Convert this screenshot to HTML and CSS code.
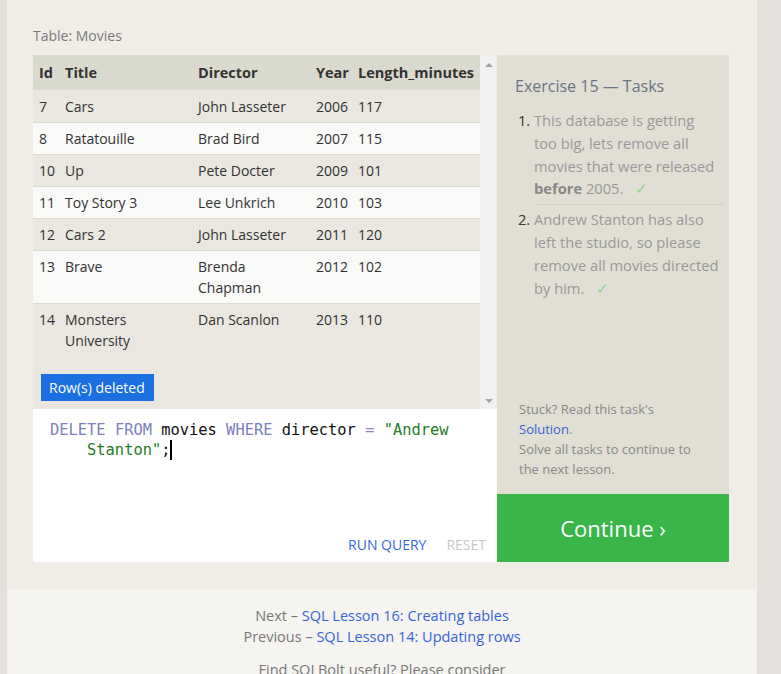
FILE: index.html
```html
<!DOCTYPE html>
<html>
<head>
<meta charset="utf-8">
<link rel="stylesheet" href="styles.css">
</head>
<body>
<div class="strip"></div>
<div class="page">
  <div class="lesson">
    <div class="caption">Table: Movies</div>
    <div class="exercise">
      <div class="work">
        <div class="table-wrap">
          <div class="table-scroll">
            <table class="data">
              <colgroup><col class="c-id"><col class="c-title"><col class="c-dir"><col class="c-year"><col class="c-len"></colgroup>
              <thead><tr><th>Id</th><th>Title</th><th>Director</th><th>Year</th><th>Length_minutes</th></tr></thead>
              <tbody>
                <tr><td>7</td><td>Cars</td><td>John Lasseter</td><td>2006</td><td>117</td></tr>
                <tr><td>8</td><td>Ratatouille</td><td>Brad Bird</td><td>2007</td><td>115</td></tr>
                <tr><td>10</td><td>Up</td><td>Pete Docter</td><td>2009</td><td>101</td></tr>
                <tr><td>11</td><td>Toy Story 3</td><td>Lee Unkrich</td><td>2010</td><td>103</td></tr>
                <tr><td>12</td><td>Cars 2</td><td>John Lasseter</td><td>2011</td><td>120</td></tr>
                <tr><td>13</td><td>Brave</td><td>Brenda<br>Chapman</td><td>2012</td><td>102</td></tr>
                <tr><td>14</td><td>Monsters<br>University</td><td>Dan Scanlon</td><td>2013</td><td>110</td></tr>
              </tbody>
            </table>
            <div class="status">Row(s) deleted</div>
          </div>
          <div class="scrollbar">
            <span class="arrow up"></span>
            <span class="arrow down"></span>
          </div>
        </div>
        <div class="editor">
          <div class="code">
            <div class="line"><span class="kw">DELETE</span> <span class="kw">FROM</span> movies <span class="kw">WHERE</span> director <span class="op">=</span> <span class="str">"Andrew</span></div>
            <div class="line wrap"><span class="str">Stanton"</span>;<span class="cursor"></span></div>
          </div>
          <div class="actions">
            <span class="run">RUN QUERY</span>
            <span class="reset">RESET</span>
          </div>
        </div>
      </div>
      <div class="side">
        <div class="tasks">
          <div class="tasks-title">Exercise 15 — Tasks</div>
          <ol class="task-list">
            <li class="narrow">This database is getting too big, lets remove all movies that were released <b>before</b> 2005.<span class="check">✓</span></li>
            <li>Andrew Stanton has also left the studio, so please remove all movies directed by him.<span class="check">✓</span></li>
          </ol>
          <div class="help">
            <p>Stuck? Read this task's<br><a class="link">Solution</a>.</p>
            <p class="solve">Solve all tasks to continue to the next lesson.</p>
          </div>
        </div>
        <div class="continue">Continue ›</div>
      </div>
    </div>
  </div>
  <div class="footer">
    <p>Next – <a class="link">SQL Lesson 16: Creating tables</a><br>Previous – <a class="link">SQL Lesson 14: Updating rows</a></p>
    <p class="consider">Find SQLBolt useful? Please consider</p>
  </div>
</div>
<div class="strip"></div>
</body>
</html>
```

FILE: styles.css
```css
* { box-sizing: border-box; }
html, body { margin: 0; padding: 0; }
body {
  display: flex;
  background: #e4e0dc;
  font-family: "Open Sans", "Noto Sans", sans-serif;
  height: 674px;
  overflow: hidden;
}
.strip { width: 7px; flex: none; }
.strip:last-child { flex: 1; }
.page {
  width: 750px;
  flex: none;
  background: #efede6;
  display: flex;
  flex-direction: column;
}
.lesson { padding: 26px 28px 27px 26px; }
.caption {
  font-size: 14px;
  line-height: 20px;
  color: #7a7a7a;
  margin-bottom: 9px;
}
.exercise { display: flex; }
.work { width: 464px; flex: none; display: flex; flex-direction: column; }
.table-wrap {
  height: 354px;
  display: flex;
  background: #e9e7e0;
}
.table-scroll { flex: 1; overflow: hidden; }
.data {
  width: 447px;
  border-collapse: collapse;
  table-layout: fixed;
  font-size: 14px;
  color: #333;
}
.c-id { width: 26px; }
.c-title { width: 133px; }
.c-dir { width: 118px; }
.c-year { width: 42px; }
.c-len { width: 128px; }
.data th {
  background: #dad9cd;
  text-align: left;
  font-weight: 700;
  font-size: 14.5px;
  height: 35px;
  padding: 0 6px;
  white-space: nowrap;
  color: #333;
}
.data td {
  padding: 5px 6px 5px;
  line-height: 21px;
  vertical-align: top;
  border-top: 1px solid #dcdad2;
}
.data tbody tr:nth-child(even) td { background: #f9f9f8; }
.data tbody tr:first-child td { border-top: none; padding-top: 6px; }
.status {
  display: inline-block;
  margin: 18px 0 0 8px;
  background: #1b6fe0;
  color: #fff;
  font-size: 14px;
  line-height: 27px;
  padding: 0 9px 0 8px;
}
.scrollbar {
  width: 17px;
  flex: none;
  background: #f1f1f1;
  display: flex;
  flex-direction: column;
  justify-content: space-between;
  align-items: center;
  padding: 8px 0 6px;
}
.arrow { width: 0; height: 0; border-left: 4px solid transparent; border-right: 4px solid transparent; }
.arrow.up { border-bottom: 4px solid #a3a3a3; }
.arrow.down { border-top: 4px solid #a3a3a3; }
.editor {
  height: 153px;
  background: #fff;
  display: flex;
  flex-direction: column;
  justify-content: space-between;
}
.code {
  padding: 11px 17px 0;
  font-family: "DejaVu Sans Mono", "Liberation Mono", monospace;
  font-size: 15.4px;
  line-height: 20px;
  color: #111;
}
.line { white-space: pre; }
.line.wrap { padding-left: 4ch; }
.kw { color: #7b80bd; }
.op { color: #9a7cc9; }
.str { color: #1f7d1f; }
.cursor {
  display: inline-block;
  width: 2px;
  height: 20px;
  background: #000;
  vertical-align: top;
}
.actions {
  display: flex;
  justify-content: flex-end;
  gap: 20px;
  padding: 0 11px 8px;
  font-size: 14px;
  line-height: 18px;
}
.run { color: #3767d8; }
.reset { color: #c8c8c8; }
.side {
  width: 232px;
  flex: none;
  display: flex;
  flex-direction: column;
}
.tasks {
  flex: 1;
  background: #e1dfd4;
  padding: 20px 4px 15px 18px;
  display: flex;
  flex-direction: column;
}
.tasks-title {
  font-size: 16px;
  line-height: 22px;
  color: #6c7384;
  margin-bottom: 12px;
}
.task-list {
  margin: 0;
  padding: 0 0 0 19px;
  font-size: 14.7px;
  line-height: 22.8px;
  color: #999;
}
.task-list li { padding: 0 0 4px 0; }
.task-list li.narrow { padding-right: 7px; }
.task-list li::marker { color: #333; }
.task-list li + li { border-top: 1px solid #d3d1c6; padding-top: 3px; }
.task-list b { color: #888; }
.check { color: #8fd08f; margin-left: 12px; }
.help {
  margin-top: auto;
  font-size: 13px;
  line-height: 20px;
  color: #888;
  padding-left: 4px;
}
.help p { margin: 0; }
.solve { width: 185px; }
.link { color: #3565d9; }
.continue {
  height: 68px;
  background: #39b54a;
  color: #fff;
  font-size: 22px;
  display: flex;
  align-items: center;
  justify-content: center;
}
.footer {
  flex: 1;
  background: #f5f4f0;
  text-align: center;
  font-size: 14.5px;
  line-height: 21px;
  color: #777;
  padding-top: 16px;
}
.footer p { margin: 0; }
.footer .consider { margin-top: 12px; }
```
